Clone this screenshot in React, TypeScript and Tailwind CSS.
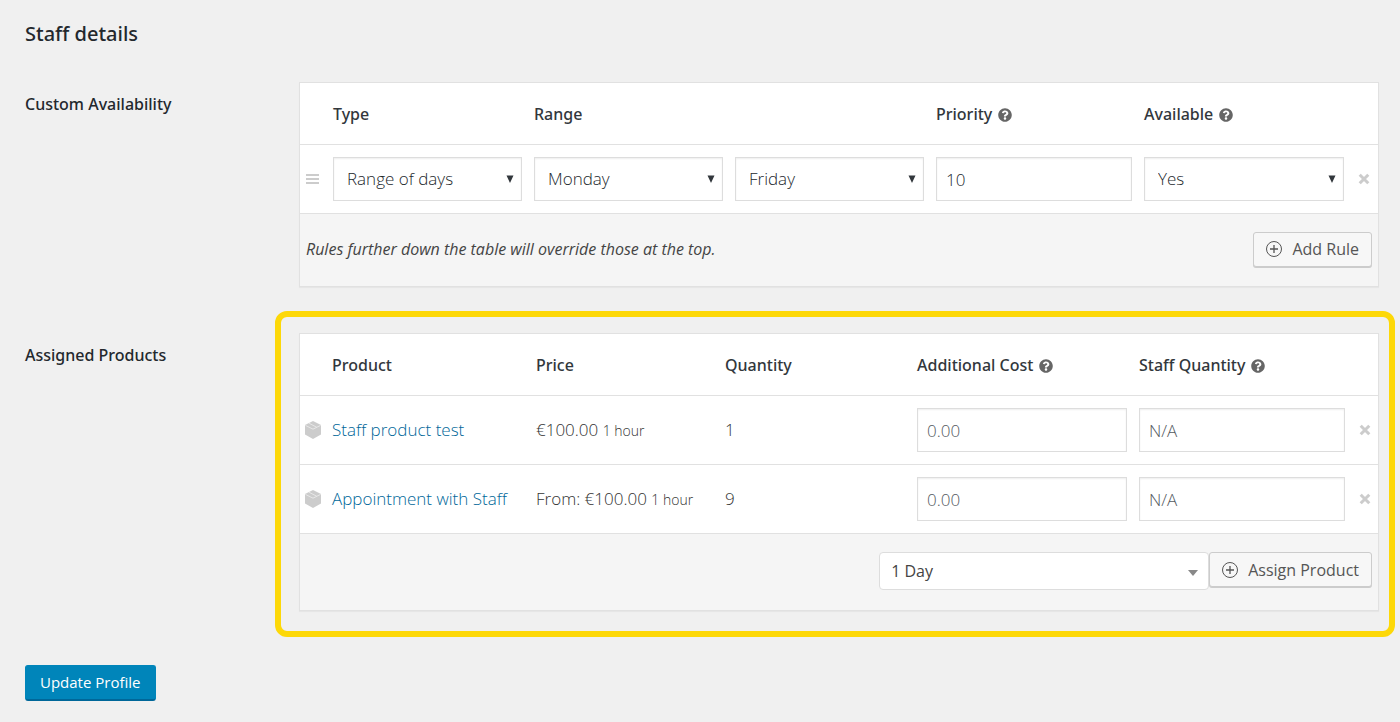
import React from 'react'
import { FaQuestionCircle } from 'react-icons/fa'

const cellInput =
  'block w-full h-11 border border-[#dddddd] bg-white text-[17px] font-light text-[#23282d] shadow-[inset_0_1px_2px_rgba(0,0,0,0.07)] outline-none placeholder:text-[#555a5f]'

function HelpTip({ label }: { label: string }) {
  return <FaQuestionCircle role="img" aria-label={label} className="inline-block ml-1.5 size-3.5 text-[#666666]" />
}

function CubeIcon() {
  return (
    <svg viewBox="0 0 16 18" className="block w-4 h-[18px]" aria-hidden="true">
      <path d="M8 0 16 4v9.600L8 18 0 13.600V4z" fill="#cccccc" />
      <path d="M.3 4.300 8 8.200l7.700-3.900M4 2.200l7.600 4" fill="none" stroke="#eeeeee" strokeWidth=".8" />
    </svg>
  )
}

function RemoveButton({ label }: { label: string }) {
  return (
    <button type="button" aria-label={label} className="block mx-auto">
      <svg viewBox="0 0 12 12" className="block size-3" aria-hidden="true">
        <path d="M1.700 1.700l8.600 8.600M10.300 1.700l-8.600 8.600" stroke="#cccccc" strokeWidth="3" />
      </svg>
    </button>
  )
}

function PlusCircle() {
  return (
    <svg viewBox="0 0 16 16" className="block size-4" fill="none" stroke="currentColor" aria-hidden="true">
      <circle cx="8" cy="8" r="7.500" />
      <path d="M8 4v8M4 8h8" strokeWidth="1.300" />
    </svg>
  )
}

interface SelectProps {
  label: string
  options: string[]
}

function CellSelect({ label, options }: SelectProps) {
  return (
    <div className="relative">
      <select aria-label={label} className={`${cellInput} appearance-none pl-[13px] pr-6`}>
        {options.map((option) => (
          <option key={option}>{option}</option>
        ))}
      </select>
      <svg viewBox="0 0 8 8" className="absolute right-2 top-[18px] size-2 pointer-events-none" aria-hidden="true">
        <path d="M.5 .5h7L4 8z" fill="#32373c" />
      </svg>
    </div>
  )
}

function ActionButton({ children }: { children: React.ReactNode }) {
  return (
    <button
      type="button"
      className="flex h-[35px] shrink-0 items-center gap-2.5 rounded-[3px] border border-[#cccccc] bg-[#f7f7f7] px-3 text-base text-[#555555] shadow-[0_1px_0_#cccccc]"
    >
      <PlusCircle />
      {children}
    </button>
  )
}

const products = [
  { name: 'Staff product test', price: '€100.00', duration: '1 hour', quantity: 1 },
  { name: 'Appointment with Staff', price: 'From: €100.00', duration: '1 hour', quantity: 9 },
]

const tableClass =
  'w-full table-fixed border-separate border-spacing-0 border border-[#e1e1e1] bg-white text-left shadow-[0_1px_1px_rgba(0,0,0,0.04)]'
const headClass =
  "h-[62px] border-b border-[#e1e1e1] px-1.5 font-['Noto_Sans',sans-serif] font-medium text-[#32373c] whitespace-nowrap"
const cellClass = 'h-[69px] border-b border-[#e1e1e1] px-1.5'
const labelClass = "w-[274px] shrink-0 pt-2.5 font-['Noto_Sans',sans-serif] font-medium text-[#23282d]"

export default function App() {
  return (
    <main className="min-h-screen bg-[#f0f0f0] pl-[25px] pr-[21px] pt-5 pb-5 font-['Open_Sans',sans-serif] text-base text-[#555555]">
      <h2 className="font-['Noto_Sans',sans-serif] text-xl leading-7 font-medium text-[#23282d]">Staff details</h2>

      <form onSubmit={(e) => e.preventDefault()}>
        <section className="mt-[34px] flex">
          <h3 className={labelClass}>Custom Availability</h3>
          <div className="min-w-0 flex-1">
            <table className={tableClass}>
              <colgroup>
                <col className="w-[27px]" />
                <col className="w-[201px]" />
                <col className="w-[201px]" />
                <col className="w-[201px]" />
                <col className="w-[208px]" />
                <col className="w-[212px]" />
                <col className="w-[28px]" />
              </colgroup>
              <thead>
                <tr>
                  <th className={headClass} />
                  <th className={headClass}>Type</th>
                  <th className={headClass} colSpan={2}>Range</th>
                  <th className={headClass}>Priority<HelpTip label="About priority" /></th>
                  <th className={headClass}>Available<HelpTip label="About availability" /></th>
                  <th className={headClass} />
                </tr>
              </thead>
              <tbody>
                <tr>
                  <td className={cellClass}>
                    <svg viewBox="0 0 13 10" className="block w-[13px] h-2.5" aria-hidden="true">
                      <path d="M0 1h13M0 5h13M0 9h13" stroke="#cccccc" strokeWidth="2" />
                    </svg>
                  </td>
                  <td className={cellClass}>
                    <CellSelect label="Type" options={['Range of days', 'Date range', 'Range of months']} />
                  </td>
                  <td className={cellClass}>
                    <CellSelect label="From" options={['Monday', 'Tuesday', 'Wednesday']} />
                  </td>
                  <td className={cellClass}>
                    <CellSelect label="To" options={['Friday', 'Saturday', 'Sunday']} />
                  </td>
                  <td className={cellClass}>
                    <input aria-label="Priority" defaultValue="10" className={`${cellInput} px-[9px]`} />
                  </td>
                  <td className={cellClass}>
                    <CellSelect label="Available" options={['Yes', 'No']} />
                  </td>
                  <td className={cellClass}><RemoveButton label="Remove rule" /></td>
                </tr>
              </tbody>
              <tfoot>
                <tr>
                  <td colSpan={7} className="h-[72px] bg-[#f5f5f5] px-1.5 pb-0.5">
                    <div className="flex items-center justify-between">
                      <p className="text-base italic text-[#444444]">
                        Rules further down the table will override those at the top.
                      </p>
                      <ActionButton>Add Rule</ActionButton>
                    </div>
                  </td>
                </tr>
              </tfoot>
            </table>
          </div>
        </section>

        <section className="mt-[46px] flex">
          <h3 className={labelClass}>Assigned Products</h3>
          <div className="relative min-w-0 flex-1">
            <div className="pointer-events-none absolute -left-6 -right-4 -top-[22px] -bottom-[26px] rounded-xl border-[6px] border-[#fdd808]" />
            <table className={tableClass}>
              <colgroup>
                <col className="w-[26px]" />
                <col className="w-[204px]" />
                <col className="w-[189px]" />
                <col className="w-[192px]" />
                <col className="w-[222px]" />
                <col className="w-[218px]" />
                <col className="w-[27px]" />
              </colgroup>
              <thead>
                <tr>
                  <th className={headClass} />
                  <th className={headClass}>Product</th>
                  <th className={headClass}>Price</th>
                  <th className={headClass}>Quantity</th>
                  <th className={headClass}>Additional Cost<HelpTip label="About additional cost" /></th>
                  <th className={headClass}>Staff Quantity<HelpTip label="About staff quantity" /></th>
                  <th className={headClass} />
                </tr>
              </thead>
              <tbody>
                {products.map((product) => (
                  <tr key={product.name} className="whitespace-nowrap text-[17px] font-light text-[#333333]">
                    <td className="h-[69px] border-b border-[#e1e1e1] pl-[5px]"><CubeIcon /></td>
                    <td className={cellClass}>
                      <a href="#" className="text-[#006799]">{product.name}</a>
                    </td>
                    <td className={cellClass}>
                      {product.price} <small className="text-sm">{product.duration}</small>
                    </td>
                    <td className={cellClass}>{product.quantity}</td>
                    <td className={cellClass}>
                      <input aria-label={`Additional cost for ${product.name}`} placeholder="0.00" className={`${cellInput} px-[9px]`} />
                    </td>
                    <td className={cellClass}>
                      <input aria-label={`Staff quantity for ${product.name}`} placeholder="N/A" className={`${cellInput} px-[9px]`} />
                    </td>
                    <td className={cellClass}><RemoveButton label={`Remove ${product.name}`} /></td>
                  </tr>
                ))}
              </tbody>
              <tfoot>
                <tr>
                  <td colSpan={7} className="h-[76px] bg-[#f5f5f5] px-1.5 pb-0.5">
                    <div className="flex items-start justify-end">
                      <div className="relative w-[330px]">
                        <select
                          aria-label="Product to assign"
                          className="block w-full h-[38px] appearance-none rounded border border-[#dddddd] bg-white pl-[11px] pr-7 text-base text-[#444444]"
                        >
                          <option>1 Day</option>
                        </select>
                        <svg viewBox="0 0 10 6" className="absolute right-[11px] top-[18px] w-2.5 h-1.5 pointer-events-none" aria-hidden="true">
                          <path d="M0 0h10L5 6z" fill="#888888" />
                        </svg>
                      </div>
                      <ActionButton>Assign Product</ActionButton>
                    </div>
                  </td>
                </tr>
              </tfoot>
            </table>
          </div>
        </section>

        <button
          type="submit"
          className="mt-[54px] block h-9 rounded-[3px] border border-b-2 border-[#0085ba] border-b-[#006799] bg-[#0085ba] px-3.5 text-[15px] text-white"
        >
          Update Profile
        </button>
      </form>
    </main>
  )
}
